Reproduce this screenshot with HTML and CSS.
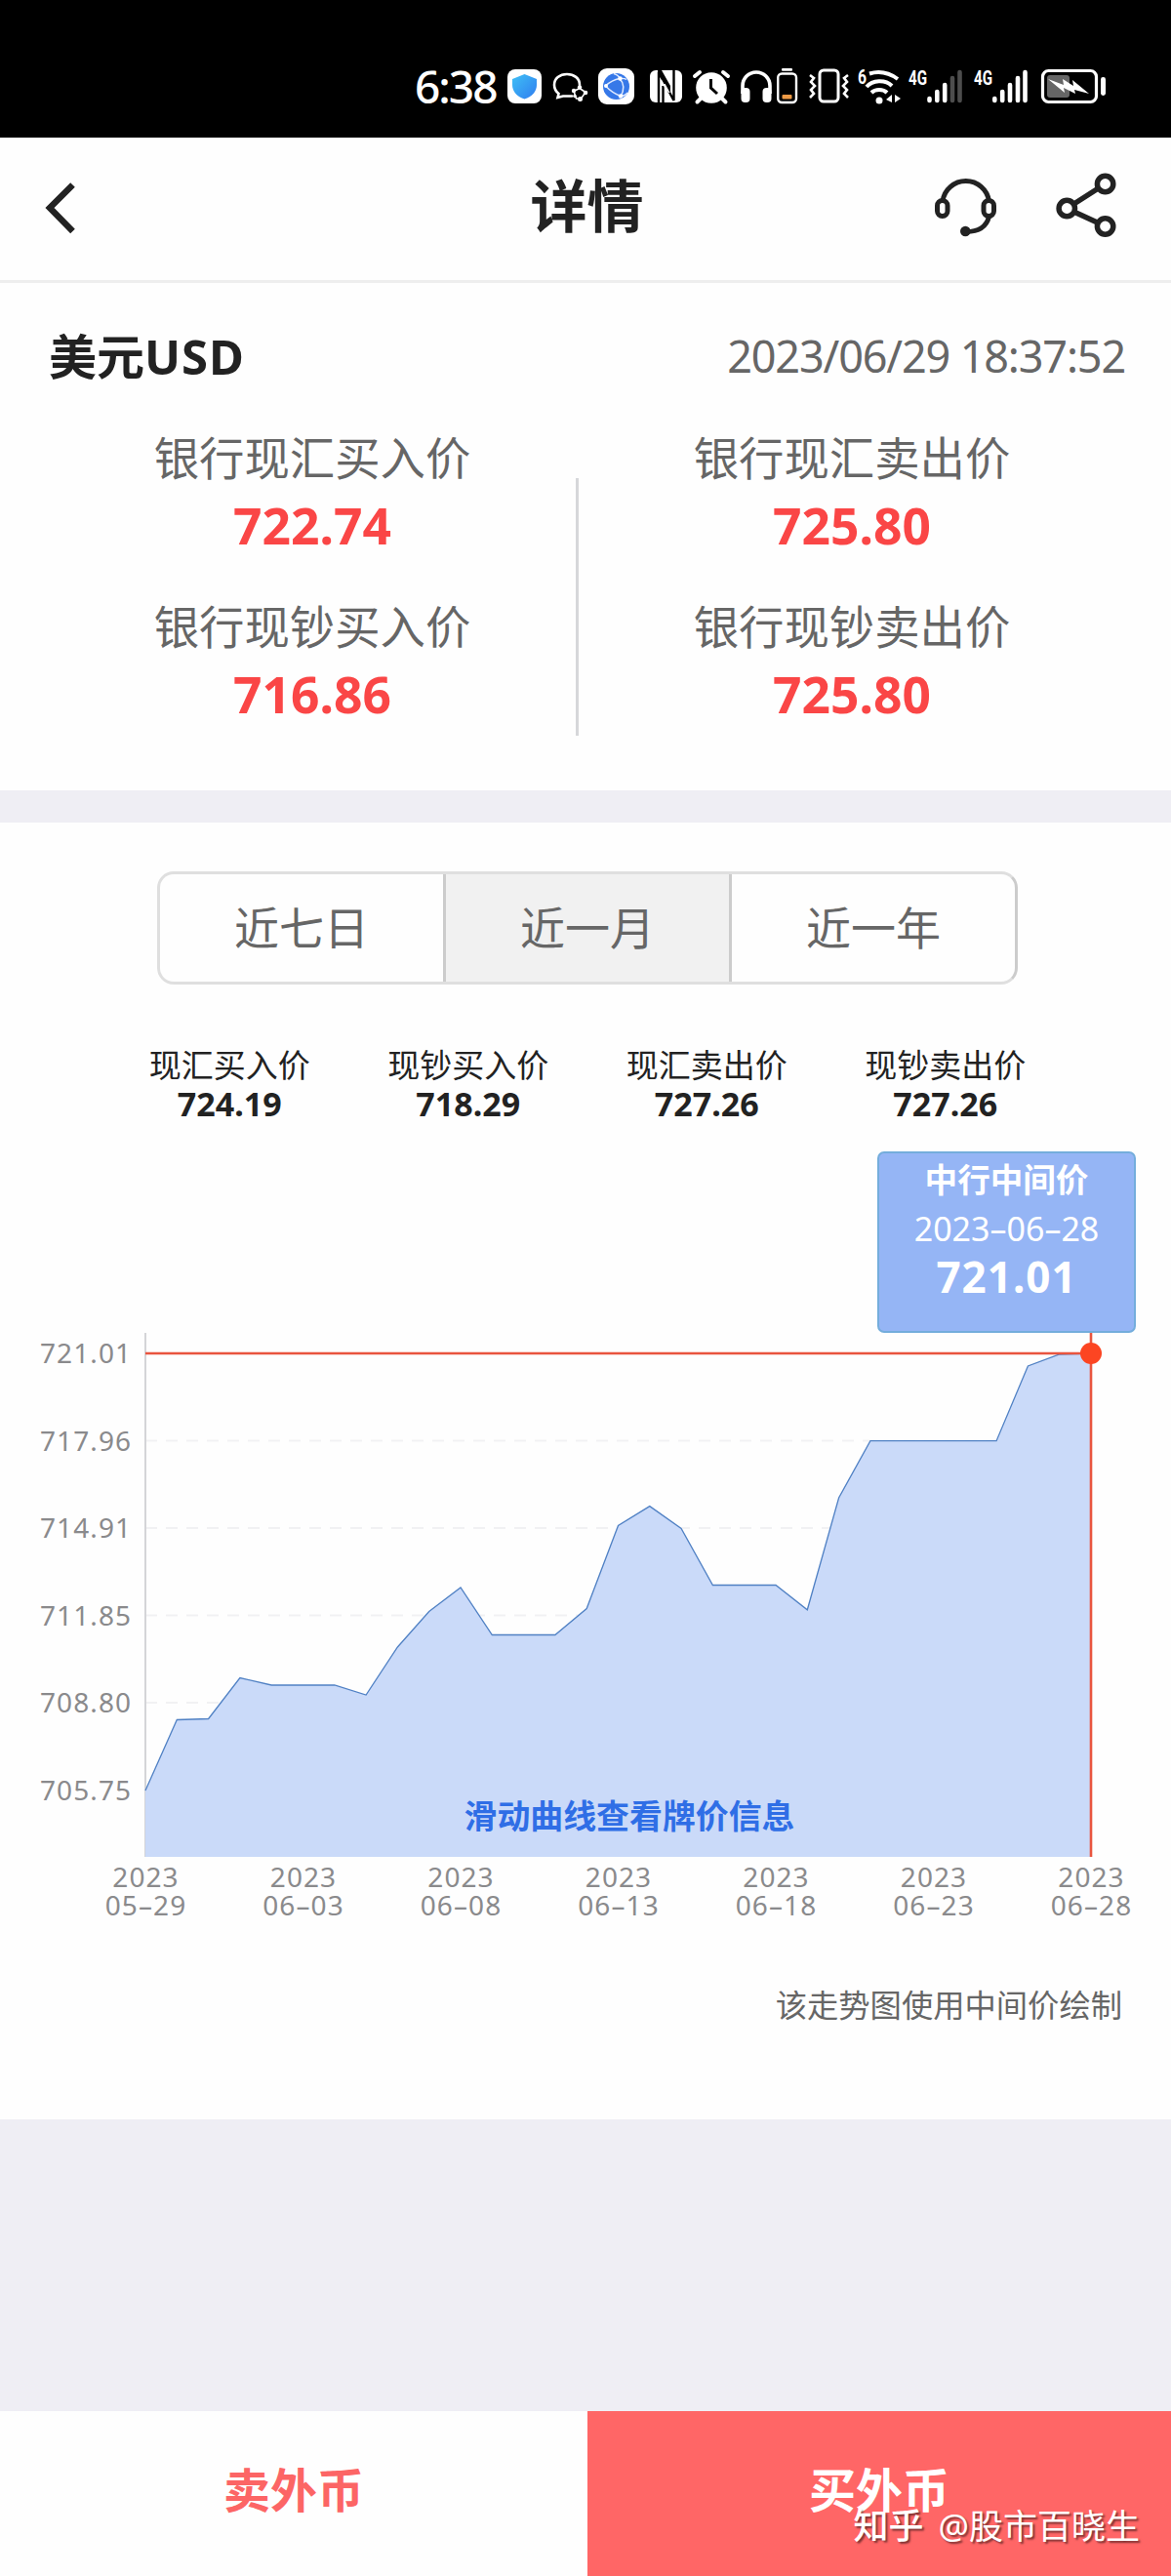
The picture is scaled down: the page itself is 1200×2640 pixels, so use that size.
FILE: index.html
```html
<!DOCTYPE html>
<html lang="zh-CN">
<head>
    <meta charset="UTF-8">
    <meta name="viewport" content="width=device-width, initial-scale=1.0">
    <title>详情</title>
    <link rel="stylesheet" href="styles.css">
</head>
<body>
    <!-- Status bar -->
    <div class="status-bar">
        <span class="time">6:38</span>
        <svg width="45" height="80" viewBox="0 0 45 80">
            <defs>
                <linearGradient id="shield" x1="0" y1="0" x2="1" y2="1">
                    <stop offset="0" stop-color="#3fc0f5"/>
                    <stop offset="1" stop-color="#2f7df0"/>
                </linearGradient>
            </defs>
            <rect x="5" y="21" width="35" height="35" rx="8" fill="#fff"/>
            <path d="M22.500 26L35 31V37C35 44 30 49 22.500 51.500C15 49 10 44 10 37V31Z" fill="url(#shield)"/>
        </svg>
        <svg width="48" height="80" viewBox="0 0 48 80" fill="none" stroke="#fff" stroke-width="2.600">
            <path d="M34 37C34 30 28 26 21 26C13.500 26 8 30.500 8 37C8 41 10 44 12.500 46L11.500 50L17 48.500H26" stroke-linecap="round"/>
            <path d="M34 40.500L40 44.500L35.500 51H30.500L28 43.500Z" stroke-width="1.600"/>
            <g fill="#fff" stroke="none">
                <circle cx="28" cy="43" r="2.200"/><circle cx="34" cy="39.500" r="2.200"/><circle cx="40" cy="45" r="2.300"/>
                <circle cx="34.500" cy="51.500" r="2.500"/><circle cx="29" cy="48.500" r="1.800"/>
            </g>
        </svg>
        <svg width="50" height="80" viewBox="0 0 50 80">
            <rect x="5" y="20" width="37" height="37" rx="9" fill="#fff"/>
            <circle cx="23.500" cy="38.500" r="13.500" fill="#3678e8"/>
            <path d="M12.500 38Q19 32 27 30.500Q32 30 34 31.500M27 30.500Q34 38 28 49M12.500 38Q19 45 28 48.500Q33 48 35 45M21 25.500Q26 27 27 30.500" fill="none" stroke="#dfeaff" stroke-width="1.500"/>
            <g fill="#fff"><circle cx="27.500" cy="30.500" r="2.200"/><circle cx="13" cy="38" r="2"/><circle cx="28" cy="48.500" r="2.200"/></g>
        </svg>
        <svg width="48" height="80" viewBox="0 0 48 80">
            <rect x="8" y="22" width="33" height="33" rx="6" fill="#fff"/>
            <path d="M17 55V24L32.500 53V22M21.500 55V38" fill="none" stroke="#000" stroke-width="2.400"/>
            <path d="M16 22H20L29 38V47L16 25Z" fill="#000"/>
            <path d="M19.500 32L26 44M23 36L28 45" stroke="#fff" stroke-width="1.200"/>
        </svg>
        <svg width="50" height="80" viewBox="0 0 50 80">
            <circle cx="23" cy="40" r="15.800" fill="#fff"/>
            <path d="M6 28L11 24M40 28L35 24M12 51L8.500 54.500M34 51L37.500 54.500" stroke="#fff" stroke-width="4" stroke-linecap="round"/>
            <path d="M22.500 31V40L29 46" fill="none" stroke="#000" stroke-width="3"/>
        </svg>
        <svg width="38" height="80" viewBox="0 0 38 80">
            <path d="M5 46V38A14 14 0 0 1 33 38V46" fill="none" stroke="#fff" stroke-width="3.600"/>
            <rect x="3.500" y="40" width="9" height="15" rx="4" fill="#fff"/>
            <rect x="25.500" y="40" width="9" height="15" rx="4" fill="#fff"/>
        </svg>
        <svg width="30" height="80" viewBox="0 0 30 80">
            <rect x="7" y="20" width="11" height="2.800" rx="1" fill="#fff"/>
            <rect x="3.200" y="25.500" width="18.800" height="29.500" rx="4" fill="none" stroke="#fff" stroke-width="2.400"/>
            <rect x="7.500" y="47" width="10" height="4.500" rx="1" fill="#ee9a45"/>
        </svg>
        <svg width="52" height="80" viewBox="0 0 52 80" fill="none" stroke="#fff">
            <rect x="16" y="22" width="19" height="32" rx="4" stroke-width="3"/>
            <path d="M6 27L10 30L7 34L11 38L7 42L10 46L6 50M45 27L41 30L44 34L40 38L44 42L41 46L45 50" stroke-width="2.600"/>
        </svg>
        <svg width="52" height="80" viewBox="0 0 52 80" fill="none" stroke="#fff">
            <text x="3" y="36" class="net" textLength="9" lengthAdjust="spacingAndGlyphs">6</text>
            <path d="M15 25.500C25 22.500 35 24.500 44 31" stroke-width="4"/>
            <path d="M12 39C18 32 31 31 38 38" stroke-width="4"/>
            <path d="M17 45C21 41 29 41 33 45" stroke-width="4"/>
            <circle cx="25" cy="53" r="3.500" fill="#fff" stroke="none"/>
            <path d="M38 47V55L32 52ZM41 47V55L47 51Z" fill="#fff" stroke="none"/>
        </svg>
        <svg width="66" height="80" viewBox="0 0 66 80">
            <text x="3" y="36.500" class="net" textLength="19" lengthAdjust="spacingAndGlyphs">4G</text>
            <g stroke="#fff" stroke-width="4.600" stroke-linecap="round">
                <path d="M24.500 51V53M32.300 44V53M40.200 37V53"/>
                <path d="M48 30V53M55.500 24V53" stroke="#4d4d4d"/>
            </g>
        </svg>
        <svg width="66" height="80" viewBox="0 0 66 80">
            <text x="4" y="36.500" class="net" textLength="19" lengthAdjust="spacingAndGlyphs">4G</text>
            <path d="M25.300 51V53M33.200 44V53M41 37V53M49 30V53M56.500 24V53" stroke="#fff" stroke-width="4.600" stroke-linecap="round"/>
        </svg>
        <svg width="80" height="80" viewBox="0 0 80 80">
            <rect x="8.500" y="22.500" width="55" height="32" rx="6" fill="none" stroke="#fff" stroke-width="3.200"/>
            <rect x="13" y="27" width="23" height="23" rx="3" fill="#666"/>
            <path d="M14 31L30 37L29 31L40 38L39 32L56 46L41 42L42 46L30 40L31 45Z" fill="#fff"/>
            <rect x="68" y="29" width="5" height="19" rx="2.400" fill="#fff"/>
        </svg>
    </div>

    <!-- Header -->
    <div class="header">
        <svg width="42" height="60" viewBox="0 0 42 60">
            <path d="M37.500 6.500L14 30L37.500 54" fill="none" stroke="#222" stroke-width="6.500"/>
        </svg>
        <h1>详情</h1>
        <div class="header-icons">
            <svg width="68" height="70" viewBox="0 0 68 70" fill="none" stroke="#222" stroke-width="5">
                <path d="M10 30A24 24 0 0 1 57.500 30"/>
                <rect x="4.500" y="29.500" width="10.500" height="16" rx="5.200"/>
                <rect x="52" y="29.500" width="10.500" height="16" rx="5.200"/>
                <path d="M57.500 46C55 56 47 61.500 34 61.500"/>
                <circle cx="33.300" cy="61" r="5.300" fill="#222" stroke="none"/>
            </svg>
            <svg width="68" height="70" viewBox="0 0 68 70" fill="none" stroke="#222" stroke-width="5.500">
                <circle cx="13.300" cy="37.500" r="8.200"/>
                <circle cx="52.600" cy="12.500" r="8.200"/>
                <circle cx="52.600" cy="56" r="8.200"/>
                <path d="M20.500 33L45.500 17M20.500 41L45.500 52.500"/>
            </svg>
        </div>
    </div>

    <!-- Current rates -->
    <div class="rates">
        <div class="rates-head">
            <h2>美元<span class="code">USD</span></h2>
            <span class="update-time">2023/06/29 18:37:52</span>
        </div>
        <div class="rates-body">
            <div class="rate-col">
                <div class="rate">
                    <div class="rate-label">银行现汇买入价</div>
                    <div class="rate-value">722.74</div>
                </div>
                <div class="rate">
                    <div class="rate-label">银行现钞买入价</div>
                    <div class="rate-value">716.86</div>
                </div>
            </div>
            <div class="divider"></div>
            <div class="rate-col">
                <div class="rate">
                    <div class="rate-label">银行现汇卖出价</div>
                    <div class="rate-value">725.80</div>
                </div>
                <div class="rate">
                    <div class="rate-label">银行现钞卖出价</div>
                    <div class="rate-value">725.80</div>
                </div>
            </div>
        </div>
    </div>

    <!-- Trend -->
    <div class="trend">
        <div class="tabs">
            <div class="tab">近七日</div>
            <div class="tab active">近一月</div>
            <div class="tab">近一年</div>
        </div>
        <div class="stats">
            <div class="stat">现汇买入价<b>724.19</b></div>
            <div class="stat">现钞买入价<b>718.29</b></div>
            <div class="stat">现汇卖出价<b>727.26</b></div>
            <div class="stat">现钞卖出价<b>727.26</b></div>
        </div>
        <div class="chart">
            <svg width="1200" height="850" viewBox="0 0 1200 850">
                <path class="grid" d="M149 326.500H1118M149 416H1118M149 505.500H1118M149 595H1118M149 684.500H1118"/>
                <path d="M149 216V753" stroke="#d4d5d8" stroke-width="2"/>
                <path class="area" d="M149 753V685L181.300 612.500L213.600 611.500L245.900 569.600L278.200 577H342.800L375.100 587L407.400 538L439.700 501.500L472 477L504.300 525.500H568.900L601.200 498.500L633.500 413.500L665.800 393.600L698.100 416.400L730.400 474.500H795L827.300 499.800L859.600 385L891.900 326.700H1021.100L1053.400 250L1085.700 238L1118 237V753Z"/>
                <path class="curve" d="M149 685L181.300 612.500L213.600 611.500L245.900 569.600L278.200 577H342.800L375.100 587L407.400 538L439.700 501.500L472 477L504.300 525.500H568.900L601.200 498.500L633.500 413.500L665.800 393.600L698.100 416.400L730.400 474.500H795L827.300 499.800L859.600 385L891.900 326.700H1021.100L1053.400 250L1085.700 238L1118 237"/>
                <path class="cursor-line" d="M149 237H1118M1118 216V753"/>
                <circle cx="1118" cy="237" r="11" fill="#fc4522"/>
                <g class="axis-y">
                    <text x="41" y="247">721.01</text>
                    <text x="41" y="336.500">717.96</text>
                    <text x="41" y="426">714.91</text>
                    <text x="41" y="515.500">711.85</text>
                    <text x="41" y="605">708.80</text>
                    <text x="41" y="694.500">705.75</text>
                </g>
                <g class="axis-x">
                    <text x="149.500" y="784">2023</text><text x="149.500" y="812.500">05–29</text>
                    <text x="311" y="784">2023</text><text x="311" y="812.500">06–03</text>
                    <text x="472.500" y="784">2023</text><text x="472.500" y="812.500">06–08</text>
                    <text x="634" y="784">2023</text><text x="634" y="812.500">06–13</text>
                    <text x="795.500" y="784">2023</text><text x="795.500" y="812.500">06–18</text>
                    <text x="957" y="784">2023</text><text x="957" y="812.500">06–23</text>
                    <text x="1118.500" y="784">2023</text><text x="1118.500" y="812.500">06–28</text>
                </g>
                <text class="hint" x="645" y="723.500">滑动曲线查看牌价信息</text>
            </svg>
            <div class="tooltip">
                <div class="tip-title">中行中间价</div>
                <div class="tip-date">2023–06–28</div>
                <div class="tip-value">721.01</div>
            </div>
        </div>
        <p class="note">该走势图使用中间价绘制</p>
    </div>

    <!-- Bottom buttons -->
    <div class="footer">
        <div class="btn sell">卖外币</div>
        <div class="btn buy">买外币</div>
        <div class="watermark"><span class="site">知乎</span>@股市百晓生</div>
    </div>
</body>
</html>
```
FILE: styles.css
```css
* {
    box-sizing: border-box;
}
body {
    margin: 0;
    width: 1200px;
    height: 2640px;
    display: flex;
    flex-direction: column;
    background-color: #efeef4;
    color: #222;
    font-family: "Noto Sans", "Noto Sans CJK SC", sans-serif;
}
svg {
    display: block;
    flex-shrink: 0;
}

/* Status bar */
.status-bar {
    display: flex;
    height: 141px;
    padding: 50px 0 0 425px;
    background-color: #000;
}
.time {
    width: 90px;
    color: #fff;
    font-size: 46px;
    font-weight: 500;
    line-height: 77px;
    letter-spacing: -2px;
}
.net {
    fill: #fff;
    stroke: none;
    font-family: Roboto, sans-serif;
    font-size: 21px;
    font-weight: 700;
}

/* Header */
.header {
    display: flex;
    height: 149px;
    padding: 42px 52px 0 37px;
    background-color: #fefefe;
    border-bottom: 3px solid #eee;
}
.header h1 {
    flex: 1;
    margin: 0 0 0 168px;
    font-size: 58px;
    line-height: 55px;
    text-align: center;
}
.header-icons {
    display: flex;
    gap: 56px;
    margin-top: -7px;
}

/* Current rates */
.rates {
    height: 520px;
    padding: 45px 47px 0 50px;
    background-color: #fefefe;
}
.rates-head {
    display: flex;
    justify-content: space-between;
    line-height: 60px;
}
.rates-head h2 {
    margin: 0;
    font-size: 49px;
}
.code {
    letter-spacing: 1px;
}
.update-time {
    color: #666;
    font-size: 45px;
    letter-spacing: -1.15px;
}
.rates-body {
    display: grid;
    grid-template-columns: 540px 3px 560px;
    margin-top: 47px;
    text-align: center;
}
.rate {
    margin-bottom: 34px;
}
.rate-label {
    color: #666;
    font-size: 46.4px;
    line-height: 54px;
}
.rate-value {
    color: #fa4646;
    font-size: 51.5px;
    font-weight: 700;
    line-height: 85px;
}
.divider {
    height: 264px;
    margin-top: 48px;
    background-color: #d6d7da;
}

/* Trend */
.trend {
    height: 1329px;
    margin-top: 33px;
    padding-top: 50px;
    background-color: #fefefe;
}
.tabs {
    display: flex;
    width: 882px;
    height: 116px;
    margin-left: 161px;
    border: 3px solid #dfdfdf;
    border-right-color: #ccc;
    border-radius: 17px;
    overflow: hidden;
}
.tab {
    flex: 1;
    color: #666;
    font-size: 46px;
    line-height: 108px;
    text-align: center;
}
.tab.active {
    background-color: #f1f1f1;
    border-left: 3px solid #ccc;
    border-right: 3px solid #ccc;
}
.stats {
    display: grid;
    grid-template-columns: repeat(4, 244.5px);
    margin: 63px 0 0 113px;
    text-align: center;
}
.stat {
    font-size: 33px;
    line-height: 40px;
}
.stat b {
    display: block;
    font-size: 34px;
    line-height: 38px;
}
.chart {
    position: relative;
    height: 850px;
}
.grid {
    stroke: #f1f1f3;
    stroke-width: 2;
    stroke-dasharray: 12 9;
}
.area {
    fill: #c8d9f9;
    fill-opacity: 0.97;
}
.curve {
    fill: none;
    stroke: #5081c4;
    stroke-width: 1.3;
}
.cursor-line {
    fill: none;
    stroke: #e9553f;
    stroke-width: 2.6;
}
.axis-y,
.axis-x {
    fill: #8a8a8c;
    font-size: 28px;
}
.axis-y {
    letter-spacing: 1.1px;
}
.axis-x {
    letter-spacing: 1.1px;
    text-anchor: middle;
}
.hint {
    fill: #2f6ee6;
    font-size: 33.9px;
    font-weight: 700;
    text-anchor: middle;
}
.tooltip {
    position: absolute;
    left: 899px;
    top: 30px;
    width: 265px;
    height: 186px;
    padding-top: 8px;
    background-color: #95b5f5;
    border: 2px solid #74addc;
    border-radius: 7px;
    color: #fff;
    text-align: center;
}
.tip-title {
    font-size: 33.6px;
    font-weight: 700;
    line-height: 39px;
}
.tip-date {
    font-size: 34px;
    line-height: 61px;
}
.tip-value {
    font-size: 44px;
    font-weight: 700;
    line-height: 36px;
    letter-spacing: 1px;
}
.note {
    margin: 29px 50px 0 0;
    color: #666;
    font-size: 32.3px;
    line-height: 50px;
    text-align: right;
}

/* Bottom buttons */
.footer {
    position: relative;
    display: flex;
    height: 169px;
    margin-top: auto;
}
.btn {
    font-size: 48px;
    font-weight: 700;
    line-height: 162px;
    text-align: center;
}
.sell {
    width: 602px;
    background-color: #fefefe;
    color: #fc6565;
}
.buy {
    width: 598px;
    background-color: #ff6666;
    color: #fff;
}
.watermark {
    position: absolute;
    right: 32px;
    bottom: 26px;
    color: #fff;
    font-size: 35px;
    line-height: 50px;
    text-shadow: 2px 2px 2px rgba(0, 0, 0, 0.5);
    white-space: nowrap;
}
.site {
    margin-right: 15px;
    font-size: 36px;
    font-weight: 500;
}
```
